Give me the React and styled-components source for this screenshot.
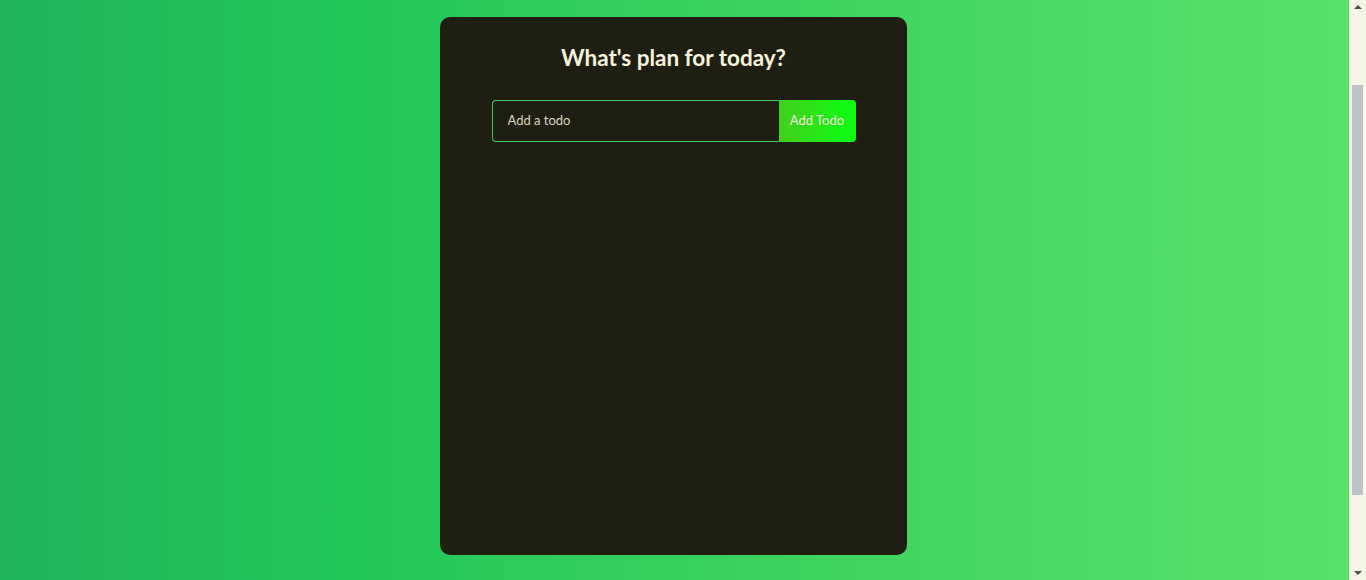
import React, { useState } from 'react';
import styled, { createGlobalStyle } from 'styled-components';

const GlobalStyle = createGlobalStyle`
  * {
    box-sizing: border-box;
    margin: 0;
    padding: 0;
  }
  html, body {
    height: 100%;
    overflow: hidden;
  }
  body {
    font-family: Lato, "Open Sans", "DejaVu Sans", sans-serif;
    background: linear-gradient(90deg, #20b35d 0%, #22c75a 25%, #3fd35f 60%, #5be36c 100%);
  }
`;

const Page = styled.div`
  display: flex;
  justify-content: center;
  padding: 17px 19px 0 0;
`;

const TodoApp = styled.div`
  display: flex;
  flex-direction: column;
  align-items: center;
  width: 467px;
  height: 538px;
  background: #1f1e12;
  border-radius: 10px;
  padding-top: 28px;
`;

const Title = styled.h1`
  font-family: Lato, "Open Sans", sans-serif;
  font-size: 22.5px;
  font-weight: 700;
  color: #f7f3dc;
  line-height: 26px;
  margin-bottom: 29px;
`;

const Form = styled.form`
  display: flex;
  width: 364px;
  height: 42px;
`;

const Input = styled.input`
  flex: 1;
  min-width: 0;
  height: 100%;
  padding: 0 15px 2px;
  background: transparent;
  border: 1px solid #3ec95a;
  border-right: none;
  border-radius: 4px 0 0 4px;
  outline: none;
  color: #efe9d2;
  font-family: Lato, "Open Sans", sans-serif;
  font-size: 13px;

  &::placeholder {
    color: #dcd6c0;
  }
`;

const AddButton = styled.button`
  width: 77px;
  height: 100%;
  border: none;
  border-radius: 0 4px 4px 0;
  padding-bottom: 2px;
  background: linear-gradient(90deg, #42cf1c 0%, #0cff10 100%);
  color: #f2f0d8;
  font-family: Lato, "Open Sans", sans-serif;
  font-size: 13px;
  cursor: pointer;
`;

// browser scrollbar as seen in the screenshot
const ScrollRail = styled.div`
  position: fixed;
  top: 0;
  right: 0;
  width: 17px;
  height: 100%;
  background: #f5f6e4;
  display: flex;
  flex-direction: column;
  align-items: center;
  justify-content: space-between;
  padding: 5px 0;
`;

const Arrow = styled.div`
  width: 0;
  height: 0;
  border-left: 4px solid transparent;
  border-right: 4px solid transparent;
  ${p => (p.$down ? 'border-top: 4px solid #505050;' : 'border-bottom: 4px solid #505050;')}
`;

const Thumb = styled.div`
  position: absolute;
  top: 85px;
  left: 3px;
  width: 11px;
  height: 410px;
  background: #c1c1ca;
`;

export default function App() {
  const [todo, setTodo] = useState('');

  const onSubmit = event => {
    event.preventDefault();
    setTodo('');
  };

  return (
    <>
      <GlobalStyle />
      <Page>
        <TodoApp>
          <Title>What's plan for today?</Title>
          <Form onSubmit={onSubmit}>
            <Input
              type="text"
              placeholder="Add a todo"
              value={todo}
              onChange={e => setTodo(e.target.value)}
            />
            <AddButton type="submit">Add Todo</AddButton>
          </Form>
        </TodoApp>
      </Page>
      <ScrollRail>
        <Arrow />
        <Thumb />
        <Arrow $down />
      </ScrollRail>
    </>
  );
}
